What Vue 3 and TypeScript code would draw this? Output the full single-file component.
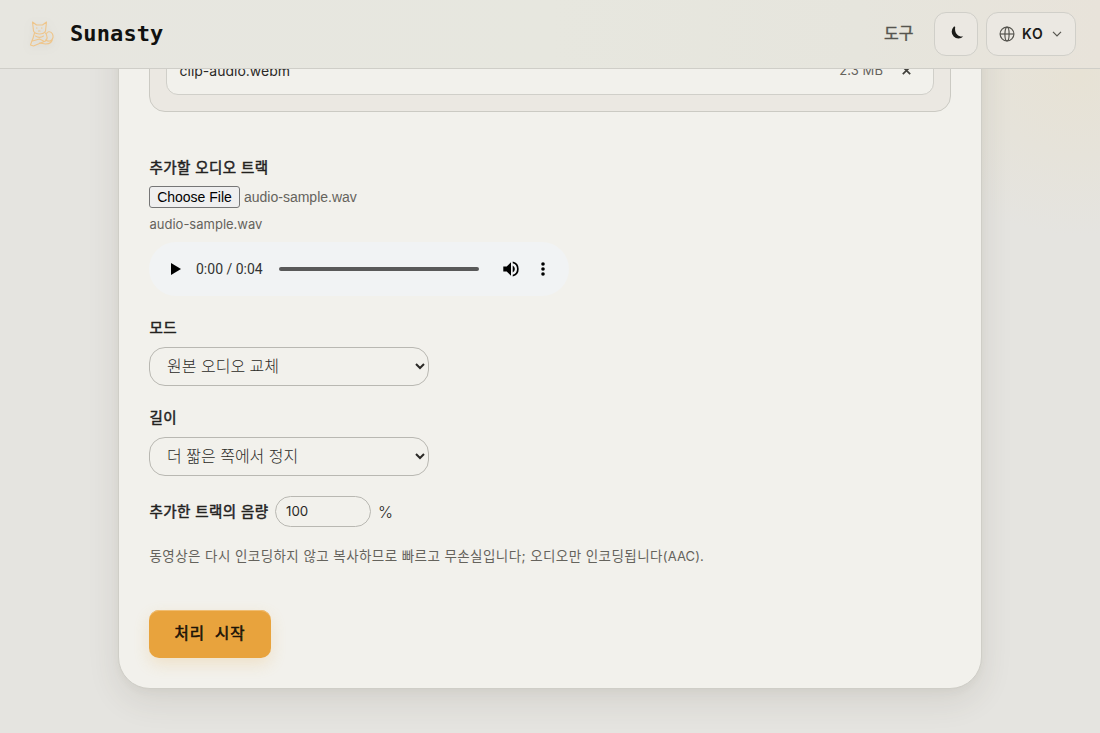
<script setup lang="ts">
import { ref } from 'vue'

const mode = ref<string>('replace')
const duration = ref<string>('shortest')
const volume = ref<number>(100)
const fileName = 'audio-sample.wav'
</script>

<template>
  <div class="page">
    <header class="header">
      <a class="brand">
        <svg class="cat" viewBox="0 0 26 30" fill="none" stroke="#efc58a" stroke-width="1.1" stroke-linejoin="round" stroke-linecap="round">
          <path d="M5 12 4 3l4 3h6l4-3-1 9c-2 4-10 4-12 0z" />
          <path d="M6 14c-1 4-2 7-3 9l-1 3 3 1 12-5c2-2 2-5 0-8M4 22l7-2 4 2M7 17c3 2 5 2 8 0" />
          <path d="M17 21c5 3 9-1 7-6-2-4-6-2-6 0M11 24l6 1c5 0 7-3 7-6" />
          <path d="M8 9h.5M13 9h.5M10 12h1.5" />
        </svg>
        <span class="name">Sunasty</span>
      </a>
      <nav class="nav">
        <a class="tools">도구</a>
        <button class="pill theme" aria-label="Theme">
          <svg width="14" height="14" viewBox="0 0 14 14"><path d="M3.600 1A6.500 6.500 0 1 0 13.200 10.400C9 11.400 4.100 7.600 5.200 1.200 5.200.5 4.300.4 3.600 1z" fill="#1b1b18" /></svg>
        </button>
        <button class="pill lang">
          <svg width="16" height="16" viewBox="0 0 16 16" fill="none" stroke="#56554f" stroke-width="1.2">
            <circle cx="8" cy="8" r="6.9" /><ellipse cx="8" cy="8" rx="2.1" ry="6.9" /><path d="M1 8h14" />
          </svg>
          <span>KO</span>
          <svg class="chev" width="10" height="6" viewBox="0 0 10 6" fill="none" stroke="#56554f" stroke-width="1.2"><path d="m1 .8 4 4 4-4" /></svg>
        </button>
      </nav>
    </header>

    <main class="card">
      <section class="files">
        <div class="file">
          <span>clip-audio.webm</span>
          <span class="size">2.3 MB</span>
          <svg width="9" height="9" viewBox="0 0 9 9" stroke="#41403b" stroke-width="1.7"><path d="m.8.8 7.400 7.400M8.200.8.8 8.200" /></svg>
        </div>
      </section>

      <div class="label track">추가할 오디오 트랙</div>
      <div class="picker"><button class="choose">Choose File</button><span>{{ fileName }}</span></div>
      <div class="chosen">{{ fileName }}</div>

      <div class="player">
        <svg class="play" width="10" height="12" viewBox="0 0 10 12"><path d="M0 0v12l10-6z" /></svg>
        <span class="time">0:00 / 0:04</span>
        <span class="bar"></span>
        <svg class="vol" width="18" height="18" viewBox="1.500 1.500 21 21"><path d="M3 9v6h4l5 5V4L7 9H3zm13.500 3A4.500 4.500 0 0 0 14 7.970v8.050A4.500 4.500 0 0 0 16.500 12zM14 3.230v2.060a7 7 0 0 1 0 13.420v2.060a9 9 0 0 0 0-17.540z" /></svg>
        <svg class="dots" width="4" height="14" viewBox="0 0 4 14"><circle cx="2" cy="2" r="1.800" /><circle cx="2" cy="7" r="1.800" /><circle cx="2" cy="12" r="1.800" /></svg>
      </div>

      <div class="label mode">모드</div>
      <select v-model="mode" class="select">
        <option value="replace">원본 오디오 교체</option>
      </select>
      <div class="label length">길이</div>
      <select v-model="duration" class="select">
        <option value="shortest">더 짧은 쪽에서 정지</option>
      </select>

      <div class="volume">
        <span class="label">추가한 트랙의 음량</span>
        <input v-model="volume" class="number" type="text" />
        <span class="percent">%</span>
      </div>
      <p class="hint">동영상은 다시 인코딩하지 않고 복사하므로 빠르고 무손실입니다; 오디오만 인코딩됩니다<span>(AAC).</span></p>
      <button class="start">처리 시작</button>
    </main>
  </div>
</template>

<style>
body { margin: 0; overflow: hidden; }
</style>

<style scoped>
* { box-sizing: border-box; }
.page {
  height: 733px;
  overflow: hidden;
  font-family: Inter, "Noto Sans CJK KR", sans-serif;
  font-size: 14px;
  color: #2b2a27;
  background: radial-gradient(ellipse 190px 160px at 1080px 75px, #e7e2d5 0%, #e6e3da 50%, rgba(229, 228, 223, 0) 100%), #e5e4e0;
}
.header {
  position: relative;
  z-index: 2;
  height: 69px;
  display: flex;
  align-items: center;
  justify-content: space-between;
  padding: 0 24px 1px 28px;
  border-bottom: 1px solid #cfcec8;
  background: linear-gradient(90deg, #e7e6e0 0%, #e7e7df 50%, #e6e5dd 78%, #e8e3da 100%);
}
.brand { display: flex; align-items: center; gap: 15px; }
.cat { width: 27px; height: 30px; filter: drop-shadow(0 2px 5px rgba(80, 80, 80, .12)); }
.name { font: 700 22px/30px "DejaVu Sans Mono", monospace; letter-spacing: .1px; color: #11110f; }
.nav { display: flex; align-items: center; }
.tools { position: relative; top: -2px; font-size: 16px; color: #56554f; -webkit-text-stroke: .4px #56554f; margin-right: 20.500px; }
.pill {
  height: 44px;
  border: 1px solid #d0cfc9;
  border-radius: 12px;
  background: #ebe8e2;
  display: flex;
  align-items: center;
  padding: 0 12px;
  font-family: inherit;
}
.theme { width: 44px; margin-right: 8px; padding: 0 0 1px 15px; }
.lang { width: 90px; font-size: 14px; font-weight: 600; color: #1b1b18; letter-spacing: .7px; }
.lang span { margin-left: 7px; }
.chev { margin-left: 9px; }
.card {
  width: 864px;
  height: 689px;
  margin: -69px 0 0 118px;
  padding: 0 30px;
  border: 1px solid #cfcec7;
  border-radius: 32px;
  background: #f2f1ec;
  box-shadow: 0 12px 32px rgba(70, 68, 50, .11), 0 2px 8px rgba(70, 68, 50, .04);
  display: flex;
  flex-direction: column;
  align-items: flex-start;
}
.files {
  width: 802px;
  height: 111px;
  flex: none;
  padding: 0 16px 16px;
  display: flex;
  align-items: flex-end;
  border: 1px solid #cbcac3;
  border-radius: 16px;
  background: #ebe8e2;
}
.file {
  width: 100%;
  height: 48px;
  display: flex;
  align-items: center;
  padding: 0 22px 2px 12.500px;
  border: 1px solid #d0cfc9;
  border-radius: 12px;
  background: #f2f1ec;
}
.size { margin-left: auto; margin-right: 19px; font-size: 13px; letter-spacing: .1px; color: #65635c; }
.label { padding-left: .5px; font-size: 14.500px; line-height: 22px; letter-spacing: .4px; -webkit-text-stroke: .5px #23221f; color: #23221f; }
.track { margin-top: 45px; }
.picker { height: 22px; margin-top: 7px; display: flex; align-items: center; gap: 4px; font-family: "Liberation Sans", sans-serif; color: #65635c; }
.choose {
  width: 91px;
  height: 22px;
  padding: 0;
  border: 1px solid #767676;
  border-radius: 3px;
  background: #efefef;
  color: #000;
  font: 14px/20px "Liberation Sans", sans-serif;
}
.chosen { margin-top: 6px; padding-left: .5px; font-size: 13px; line-height: 20px; color: #65635c; }
.player {
  width: 420px;
  height: 54px;
  margin-top: 8px;
  padding-left: 22px;
  display: flex;
  align-items: center;
  border-radius: 27px;
  background: #f1f3f4;
}
.time { width: 67px; margin-left: 15px; font: 14px/20px Roboto, sans-serif; color: #333; white-space: nowrap; }
.bar { width: 200px; height: 4px; margin-left: 16px; border-radius: 2px; background: #595959; }
.vol { margin-left: 23px; }
.dots { margin-left: 21px; }
.mode { margin-top: 21px; }
.length { margin-top: 21px; }
.select {
  width: 280px;
  height: 39px;
  flex: none;
  margin: 8px 0 0;
  padding: 0 0 2px 13px;
  border: 1px solid #b9b8b2;
  border-radius: 16px;
  background: #f2f1ec;
  color: #2b2a27;
  font: 300 16px Inter, "Noto Sans CJK KR", sans-serif;
}
.volume { display: flex; align-items: center; height: 31px; margin-top: 20px; }
.volume .label { width: 120px; white-space: nowrap; }
.number {
  width: 96px;
  height: 31px;
  margin: 0 7px 0 6px;
  padding: 0 10px 1px;
  border: 1px solid #b9b8b2;
  border-radius: 16px;
  background: #f2f1ec;
  color: #2b2a27;
  font: 13.333px Inter, sans-serif;
}
.percent { font-size: 16px; font-weight: 300; }
.hint { margin: 19px 0 0; padding-left: .5px; font-size: 13.500px; line-height: 20px; letter-spacing: .42px; color: #65635c; white-space: nowrap; }
.hint span { font-size: 13px; letter-spacing: .1px; }
.start {
  width: 122px;
  height: 48px;
  flex: none;
  margin-top: 44px;
  padding: 0 0 4px;
  border: 0;
  border-radius: 10px;
  background: #e8a33d;
  box-shadow: inset 0 1px 0 #f0bd72, 0 6px 16px rgba(232, 163, 61, .2);
  color: #1c1408;
  font: 15.500px "Liberation Mono", "Noto Sans CJK KR", monospace;
  -webkit-text-stroke: .6px #1c1408;
  letter-spacing: .9px;
}
</style>
